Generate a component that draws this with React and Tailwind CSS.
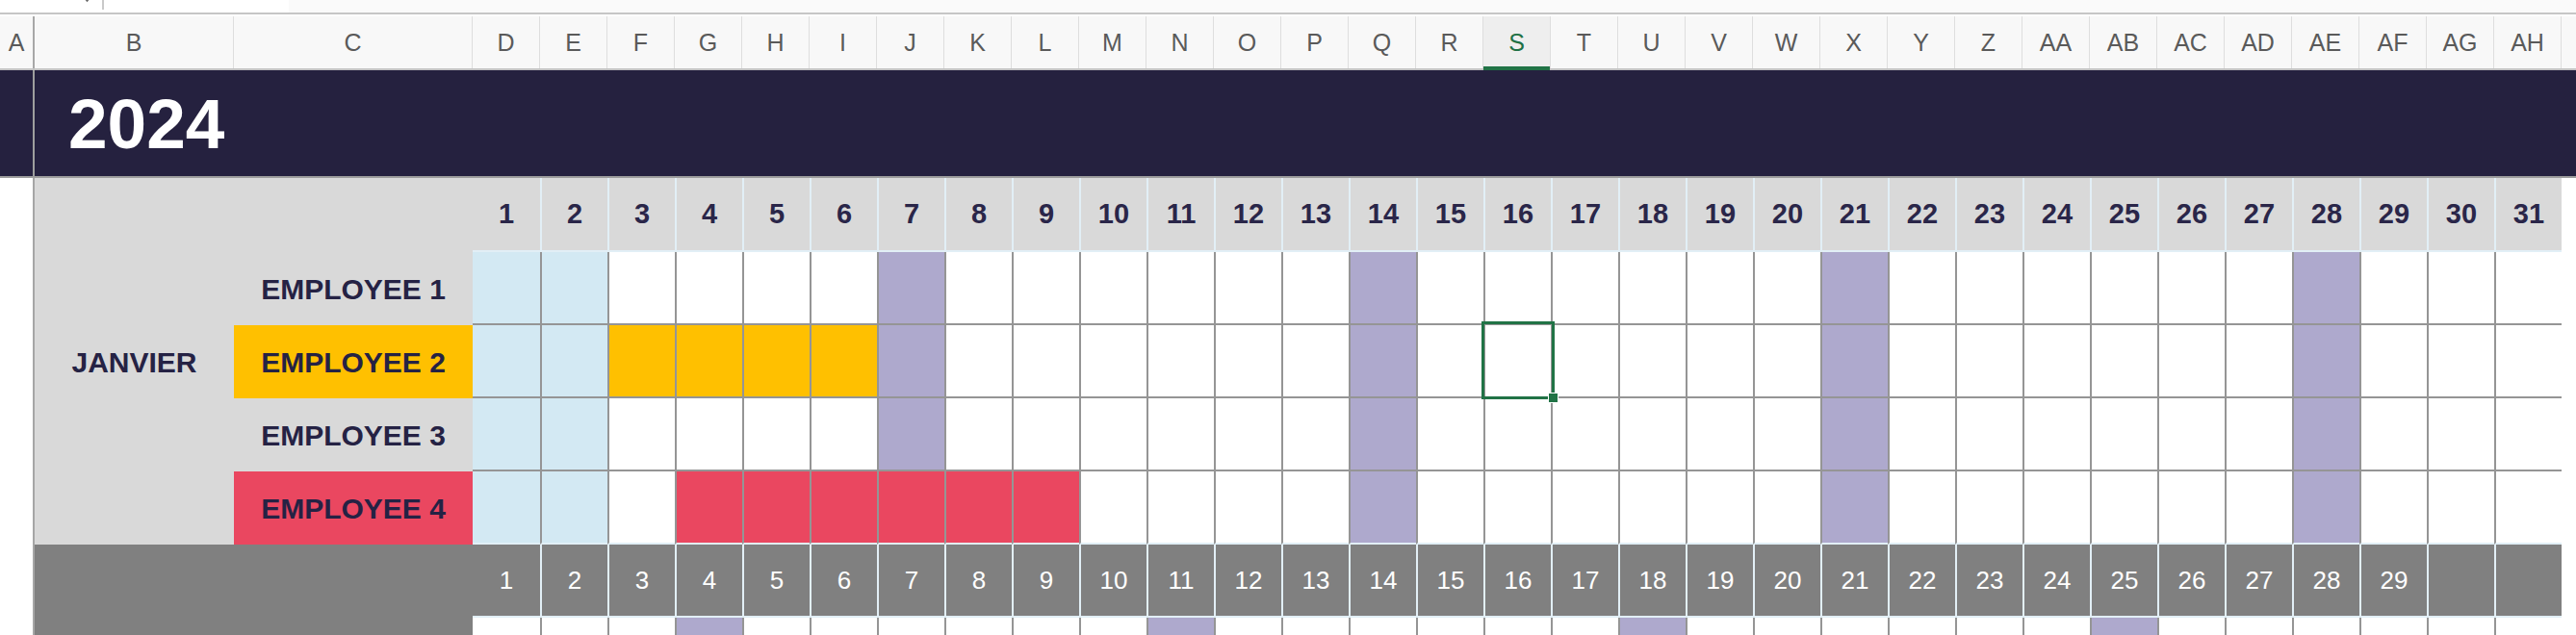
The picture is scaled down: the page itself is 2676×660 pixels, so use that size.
const LETTERS = ['D','E','F','G','H','I','J','K','L','M','N','O','P','Q','R','S','T','U','V','W','X','Y','Z','AA','AB','AC','AD','AE','AF','AG','AH'];
const DAYS = Array.from({ length: 31 }, (_, i) => i + 1);

const employees = [
  { name: 'EMPLOYEE 1', label: 'bg-[#d9d9d9]' },
  { name: 'EMPLOYEE 2', label: 'bg-[#ffc000]', fill: 'bg-[#ffc000]', from: 3, to: 6, month: 'JANVIER' },
  { name: 'EMPLOYEE 3', label: 'bg-[#d9d9d9]' },
  { name: 'EMPLOYEE 4', label: 'bg-[#ea4760]', fill: 'bg-[#ea4760]', from: 4, to: 9 },
];

function cellColor(emp, d, weekends) {
  if (d <= 2) return 'bg-[#d3e9f3]';
  if (emp.fill && d >= emp.from && d <= emp.to) return emp.fill;
  if (weekends.includes(d)) return 'bg-[#aea9cd]';
  return 'bg-white';
}

function FreezeCell({ dark }) {
  return <div className={`w-[36px] shrink-0 h-full border-r-2 ${dark ? 'bg-[#25213f] border-r-[#9e9e9e]' : 'bg-white border-r-[#a6a6a6]'}`}></div>;
}

function TopStrip() {
  return (
    <div className="h-[15px] flex border-b-2 border-b-[#c6c6c6] bg-white">
      <div className="w-[106px] shrink-0 relative">
        <svg className="absolute left-[86px] top-[-5px]" width="9" height="8" viewBox="0 0 9 8">
          <path d="M1 2 L4.5 6 L8 2" fill="none" stroke="#6b6b6b" strokeWidth="1.5" />
        </svg>
      </div>
      <div className="w-[2px] h-[10px] bg-[#c9c9c9] shrink-0"></div>
      <div className="w-[192px] shrink-0 bg-white"></div>
      <div className="flex-1 bg-[#fafafa]"></div>
    </div>
  );
}

function ColumnHeader() {
  return (
    <div className="h-[58px] pt-[2px] bg-white">
      <div className="h-full flex border-b-2 border-b-[#c3c3c3] bg-[#f8f8f8] text-[25px] leading-none text-[#5a5a5a]">
        <div className="w-[36px] shrink-0 h-full border-r-2 border-r-[#a8a8a8] flex items-center justify-center">A</div>
        <div className="w-[207px] shrink-0 h-full border-r border-r-[#dedede] flex items-center justify-center">B</div>
        <div className="w-[248px] shrink-0 h-full border-r border-r-[#dedede] flex items-center justify-center">C</div>
        {LETTERS.map((l) =>
          l === 'S' ? (
            <div key={l} className="w-[70px] shrink-0 h-full border-r border-r-[#dedede] bg-[#eeeeee] text-[#1e7145] flex items-center justify-center relative">
              S
              <div className="absolute left-0 right-0 bottom-[-2px] h-[4px] bg-[#217346]"></div>
            </div>
          ) : (
            <div key={l} className="w-[70px] shrink-0 h-full border-r border-r-[#dedede] flex items-center justify-center">{l}</div>
          )
        )}
        <div className="flex-1 h-full"></div>
      </div>
    </div>
  );
}

function YearBand() {
  return (
    <div className="h-[112px] flex bg-[#25213f] border-b-2 border-b-[#9d9d9d]">
      <FreezeCell dark />
      <div className="pl-[35px] flex items-center text-white font-bold text-[73px] leading-none">2024</div>
    </div>
  );
}

function JanuaryBlock() {
  const weekends = [7, 14, 21, 28];
  return (
    <div>
      <div className="h-[77px] flex">
        <FreezeCell />
        <div className="w-[455px] shrink-0 bg-[#d9d9d9]"></div>
        {DAYS.map((d, i) => (
          <div
            key={d}
            className={`w-[70px] shrink-0 h-full bg-[#d9d9d9] border-b-2 border-b-[#e2eff6] flex items-center justify-center text-[29px] font-bold text-[#2a2649] ${i > 0 ? 'border-l-2 border-l-[#e2eff6]' : ''}`}
          >
            {d}
          </div>
        ))}
        <div className="flex-1 bg-white"></div>
      </div>

      {employees.map((emp, r) => (
        <div key={emp.name} className="h-[76px] flex">
          <FreezeCell />
          <div className="w-[207px] shrink-0 bg-[#d9d9d9] flex items-center justify-center text-[30px] font-bold text-[#252244]">
            {emp.month}
          </div>
          <div className={`w-[248px] shrink-0 ${emp.label} flex items-center justify-center text-[30px] font-bold text-[#252244]`}>
            {emp.name}
          </div>
          {DAYS.map((d, i) => (
            <div
              key={d}
              className={`w-[70px] shrink-0 h-full relative ${cellColor(emp, d, weekends)} ${r === 3 ? 'border-b-2 border-b-[#e2eff6]' : 'border-b-2 border-b-[#959595]'} ${i > 0 ? 'border-l-2 border-l-[#959595]' : ''}`}
            >
              {r === 1 && d === 16 && (
                <div className="absolute z-10 left-[-4px] top-[-4px] w-[76px] h-[81px] border-[3px] border-[#217346]">
                  <div className="absolute right-[-7px] bottom-[-7px] w-[11px] h-[11px] bg-[#217346] border border-white"></div>
                </div>
              )}
            </div>
          ))}
          <div className="flex-1 bg-white"></div>
        </div>
      ))}
    </div>
  );
}

function FebruaryBlock() {
  const weekends = [4, 11, 18, 25];
  return (
    <div>
      <div className="h-[76px] flex">
        <FreezeCell />
        <div className="w-[455px] shrink-0 bg-[#808080]"></div>
        {DAYS.map((d, i) => (
          <div
            key={d}
            className={`w-[70px] shrink-0 h-full bg-[#808080] border-b-2 border-b-[#e2eff6] flex items-center justify-center text-[26px] text-white ${i > 0 ? 'border-l-2 border-l-[#e2eff6]' : ''}`}
          >
            {d <= 29 ? d : ''}
          </div>
        ))}
        <div className="flex-1 bg-white"></div>
      </div>
      <div className="h-[76px] flex">
        <FreezeCell />
        <div className="w-[455px] shrink-0 bg-[#808080]"></div>
        {DAYS.map((d, i) => (
          <div
            key={d}
            className={`w-[70px] shrink-0 h-full border-b-2 border-b-[#959595] ${weekends.includes(d) ? 'bg-[#aea9cd]' : 'bg-white'} ${i > 0 ? 'border-l-2 border-l-[#959595]' : ''}`}
          ></div>
        ))}
        <div className="flex-1 bg-white"></div>
      </div>
    </div>
  );
}

export default function App() {
  return (
    <div className="w-[2676px] h-[660px] overflow-hidden bg-white font-['Liberation_Sans',Arial,sans-serif]">
      <TopStrip />
      <ColumnHeader />
      <YearBand />
      <JanuaryBlock />
      <FebruaryBlock />
    </div>
  );
}
